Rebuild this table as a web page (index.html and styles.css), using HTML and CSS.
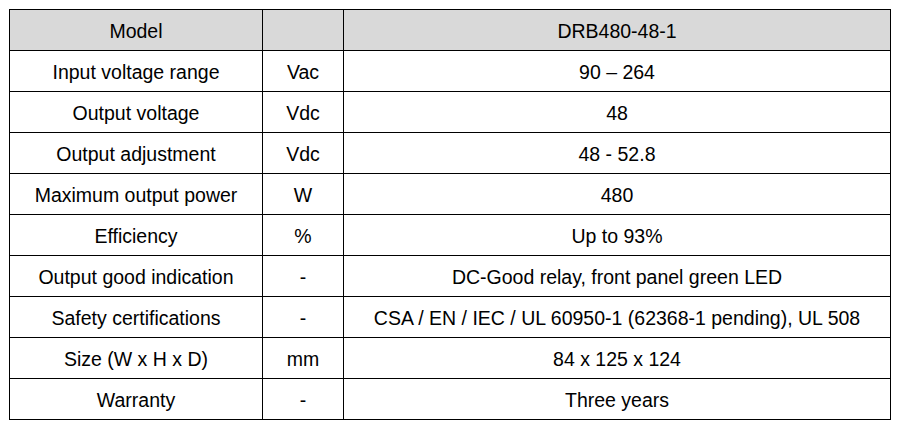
FILE: index.html
```html
<!DOCTYPE html>
<html>
<head>
<meta charset="utf-8">
<link rel="stylesheet" href="styles.css">
</head>
<body>
<table class="spec">
  <colgroup>
    <col class="c1"><col class="c2"><col class="c3">
  </colgroup>
  <tr class="head"><td>Model</td><td></td><td>DRB480-48-1</td></tr>
  <tr><td>Input voltage range</td><td>Vac</td><td>90 – 264</td></tr>
  <tr><td>Output voltage</td><td>Vdc</td><td>48</td></tr>
  <tr><td>Output adjustment</td><td>Vdc</td><td>48 - 52.8</td></tr>
  <tr><td>Maximum output power</td><td>W</td><td>480</td></tr>
  <tr><td>Efficiency</td><td>%</td><td>Up to 93%</td></tr>
  <tr><td>Output good indication</td><td>-</td><td>DC-Good relay, front panel green LED</td></tr>
  <tr><td>Safety certifications</td><td>-</td><td>CSA / EN / IEC / UL 60950-1 (62368-1 pending), UL 508</td></tr>
  <tr><td>Size (W x H x D)</td><td>mm</td><td>84 x 125 x 124</td></tr>
  <tr><td>Warranty</td><td>-</td><td>Three years</td></tr>
</table>
</body>
</html>
```
FILE: styles.css
```css
html, body {
  margin: 0;
  padding: 0;
  background: #ffffff;
}
body {
  padding: 9px 0 0 9px;
  font-family: "Liberation Sans", Arial, sans-serif;
  font-size: 19.5px;
  color: #000000;
}
.spec {
  border-collapse: collapse;
  table-layout: fixed;
  width: 881px;
}
.c1 { width: 253px; }
.c2 { width: 81px; }
.c3 { width: 547px; }
.spec td {
  border: 1px solid #000000;
  padding: 1px 0 0 0;
  text-align: center;
  vertical-align: middle;
  box-sizing: border-box;
  height: 41px;
  line-height: 22px;
}
.spec .head td {
  background: #d9d9d9;
}
```
